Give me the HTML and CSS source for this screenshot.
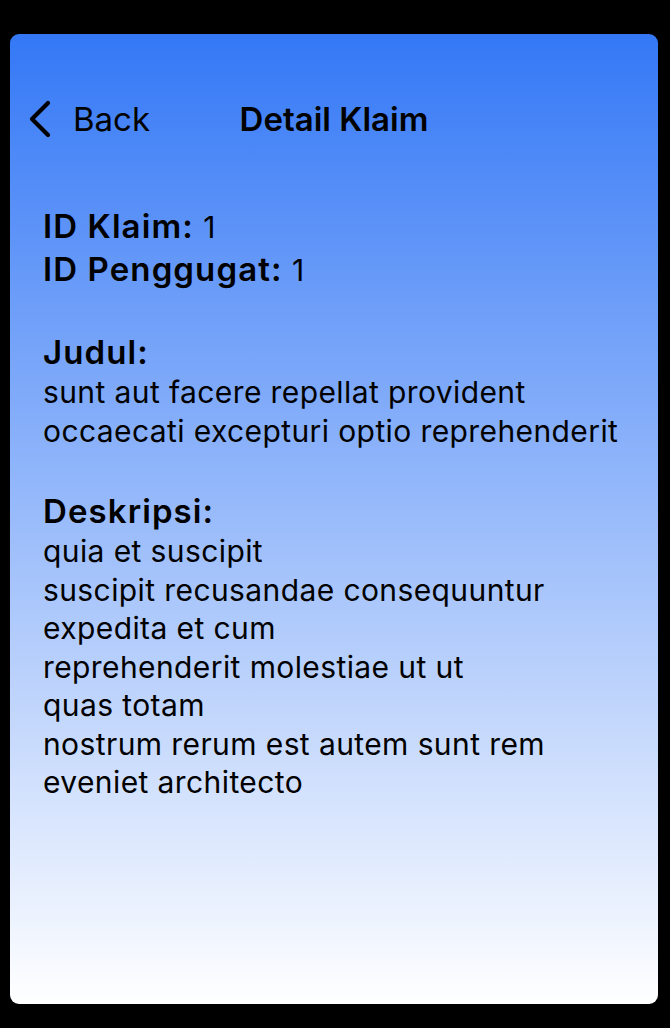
FILE: index.html
```html
<!DOCTYPE html>
<html lang="id">
<head>
<meta charset="utf-8">
<title>Detail Klaim</title>
<link rel="stylesheet" href="styles.css">
</head>
<body>
<div class="screen">
  <header class="nav">
    <a class="back" href="#">
      <svg class="chev" width="26" height="38" viewBox="0 0 26 38" aria-hidden="true">
        <path d="M21 3 L5 19 L21 35" fill="none" stroke="#000" stroke-width="4.2" stroke-linecap="round" stroke-linejoin="round"/>
      </svg>
      <span>Back</span>
    </a>
    <h1 class="title">Detail Klaim</h1>
    <span class="spacer"></span>
  </header>
  <main class="content">
    <section class="block">
      <p class="row"><b class="label">ID Klaim:</b> <span class="val">1</span></p>
      <p class="row"><b class="label">ID Penggugat:</b> <span class="val">1</span></p>
    </section>
    <section class="block">
      <p class="row"><b class="label">Judul:</b></p>
      <p class="body">sunt aut facere repellat provident<br>occaecati excepturi optio reprehenderit</p>
    </section>
    <section class="block">
      <p class="row"><b class="label">Deskripsi:</b></p>
      <p class="body">quia et suscipit<br>suscipit recusandae consequuntur<br>expedita et cum<br>reprehenderit molestiae ut ut<br>quas totam<br>nostrum rerum est autem sunt rem<br>eveniet architecto</p>
    </section>
  </main>
</div>
</body>
</html>
```
FILE: styles.css
```css
html, body {
  margin: 0;
  padding: 0;
  background: #000;
}
body {
  font-family: Inter, "Noto Sans", "Liberation Sans", sans-serif;
  color: #000;
  padding: 34px 12px 24px 10px;
}
.screen {
  width: 648px;
  height: 970px;
  box-sizing: border-box;
  border-radius: 9px;
  background: linear-gradient(to bottom, #3478f6 0%, #ffffff 100%);
  padding: 65px 0 0 0;
  display: flex;
  flex-direction: column;
}
.nav {
  display: grid;
  grid-template-columns: 1fr auto 1fr;
  align-items: center;
  height: 40px;
}
.back {
  display: flex;
  align-items: center;
  gap: 20px;
  padding-left: 17px;
  color: #000;
  text-decoration: none;
  font-size: 33px;
  line-height: 40px;
}
.chev {
  display: block;
}
.title {
  margin: 0;
  font-size: 33px;
  line-height: 40px;
  font-weight: 600;
}
.content {
  display: flex;
  flex-direction: column;
  gap: 40px;
  padding: 66px 20px 0 33px;
}
.block p {
  margin: 0;
}
.row {
  font-size: 33px;
  line-height: 42px;
}
.label {
  font-weight: 600;
  letter-spacing: 1.1px;
}
.val {
  font-size: 30px;
  font-weight: 400;
  letter-spacing: 0.4px;
}
.body {
  font-size: 30px;
  line-height: 38.5px;
  letter-spacing: 0.4px;
}
```
